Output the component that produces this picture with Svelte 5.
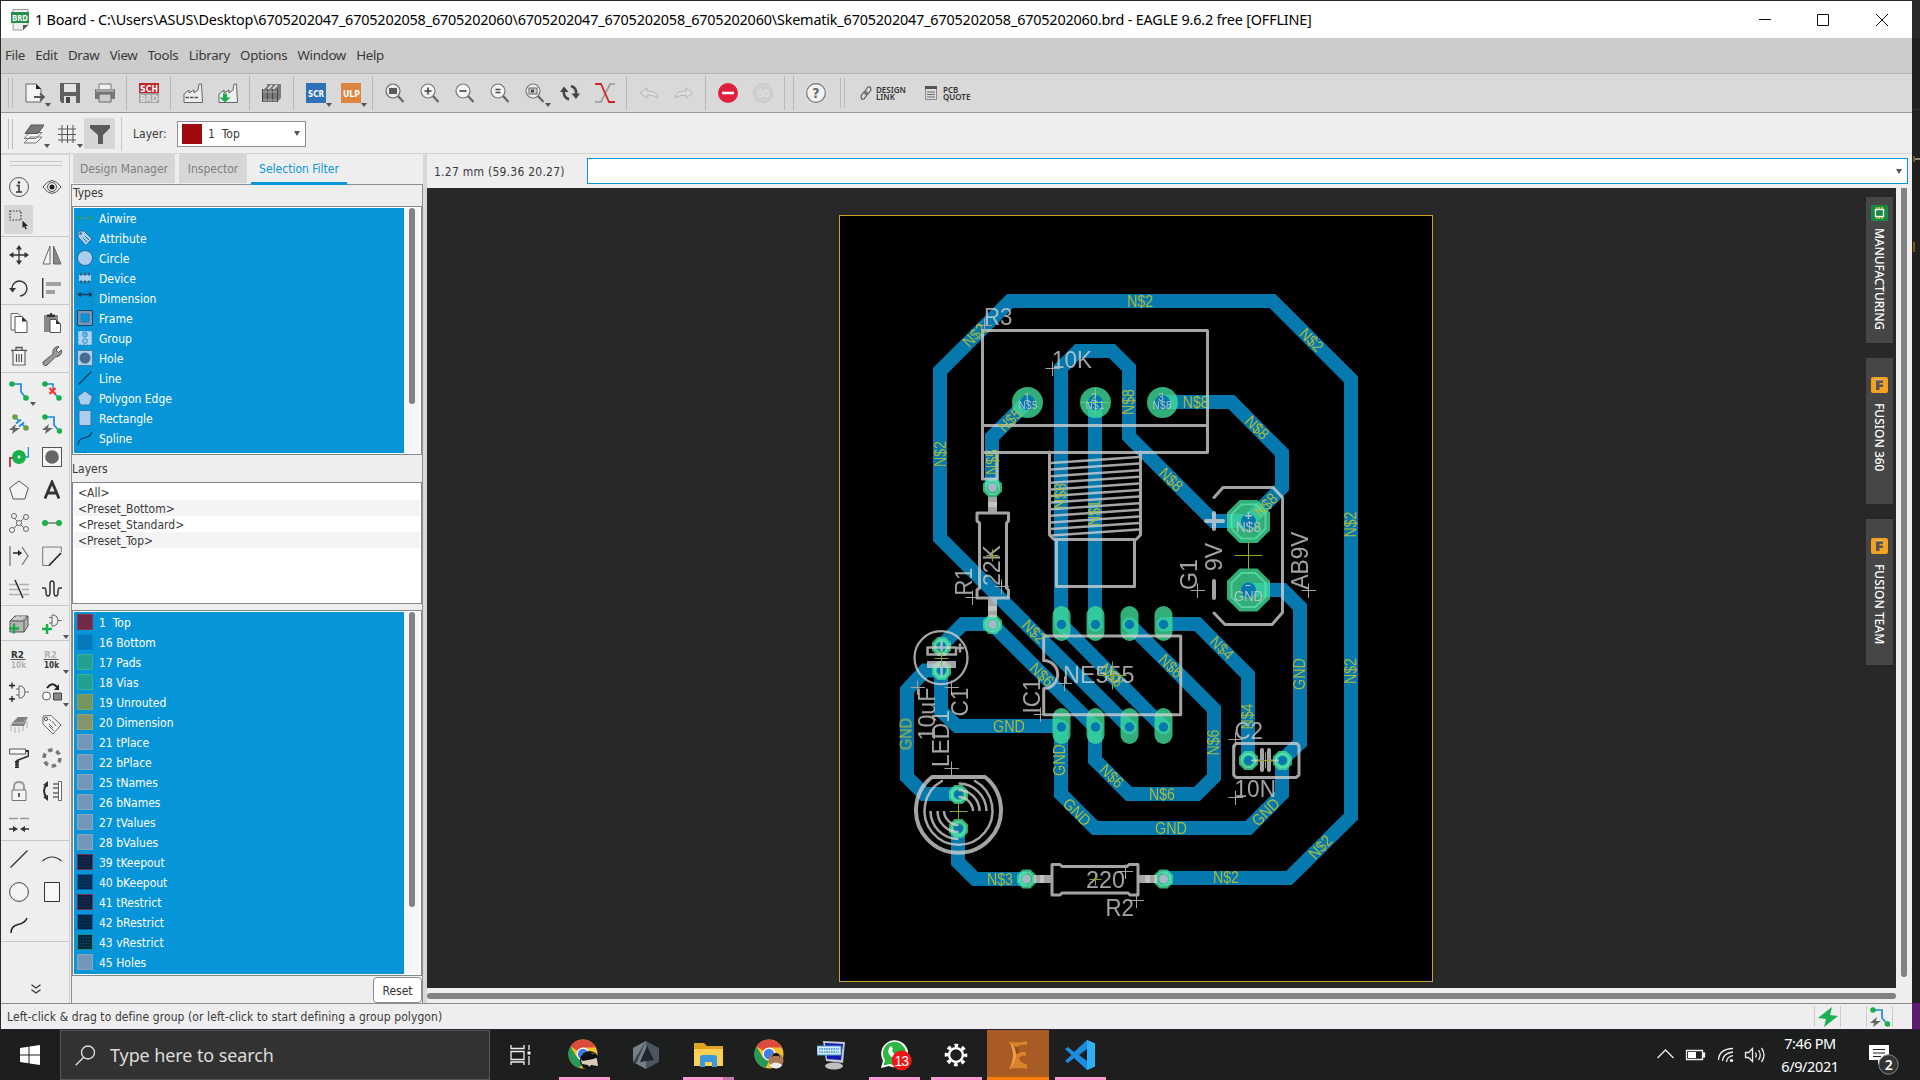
<script>
  const icons = {
    newfile: '<path d="M1 1h10l5 5v13H1z" fill="#f4f4f4" stroke="#666"/><path d="M11 1l5 5h-5z" fill="#222"/><path d="M9 14h9M15 10.500l4 3.500-4 3.500" fill="none" stroke="#555" stroke-width="1.800"/>',
    save: '<path d="M0 0h20v20H2l-2-2z" fill="#606060"/><path d="M4 1h12v8H4z" fill="#e4e4e4"/><path d="M4 13h12v7H4z" fill="#ddd"/><path d="M6 14h4v6H6z" fill="#444"/>',
    print: '<path d="M4 6V1h12v5" fill="#f0f0f0" stroke="#777"/><path d="M0 6h20v10H0z" fill="#777"/><path d="M1 6h18v3H1z" fill="#a2a2a2"/><path d="M4 11h12v8H4z" fill="#ccc" stroke="#666"/>',
    sch: '<rect width="20" height="10" fill="#c4242c"/><rect y="10" width="20" height="10" fill="#a2a2a2"/><text x="1" y="8.700" font-size="9" font-weight="700" fill="#fff" textLength="18" lengthAdjust="spacingAndGlyphs">SCH</text><text x="1" y="18.700" font-size="9" font-weight="700" fill="#e2e2e2" textLength="18" lengthAdjust="spacingAndGlyphs">BRD</text>',
    factory: '<path d="M1 19.500V11l5-4v3l5-3v3l4-3 1-6h2.500l1 18.500z" fill="#eee" stroke="#666"/><path d="M2.500 14.500h3.500m1 0h3.500m1 0h3.500" stroke="#555" stroke-width="1.700"/>',
    factory2: '<path d="M1 19.500V11l5-4v3l5-3v3l4-3 1-6h2.500l1 18.500z" fill="#eee" stroke="#666"/><path d="M5 10.500h4v4h3.500L7 19.500 1.500 14.500H5z" fill="#1cb04c"/>',
    books: '<path d="M0 6l5-5h14v14l-4 4H0z" fill="#7a7a7a"/><path d="M1 6l4-4M6 6l4-4M11 6l4-4" stroke="#eee" stroke-width="1.500"/><path d="M.5 6v13m5-13v13m5-13v13m5-13v13" stroke="#444"/><path d="M1 9h14M1 17h14" stroke="#aaa"/>',
    scr: '<rect width="20" height="20" fill="#2d72b8"/><text x="2" y="13.500" font-size="9" font-weight="700" fill="#fff" textLength="16" lengthAdjust="spacingAndGlyphs">SCR</text>',
    ulp: '<rect width="20" height="20" fill="#dc8440"/><text x="2" y="13.500" font-size="9" font-weight="700" fill="#fff" textLength="17" lengthAdjust="spacingAndGlyphs">ULP</text>',
    zfit: '<circle cx="8" cy="8" r="7" fill="#eee" stroke="#666" stroke-width="1.200"/><path d="M13 13l5.500 6" stroke="#666" stroke-width="2.200"/><rect x="4" y="5" width="8" height="6" fill="#5a5a5a"/>',
    zin: '<circle cx="8" cy="8" r="7" fill="#f4f4f4" stroke="#777" stroke-width="1.200"/><path d="M13 13l5.500 6" stroke="#666" stroke-width="2.200"/><path d="M4.500 8h7M8 4.500v7" stroke="#444" stroke-width="1.600"/>',
    zout: '<circle cx="8" cy="8" r="7" fill="#f4f4f4" stroke="#777" stroke-width="1.200"/><path d="M13 13l5.500 6" stroke="#666" stroke-width="2.200"/><path d="M4.500 8h7" stroke="#444" stroke-width="1.600"/>',
    zeq: '<circle cx="8" cy="8" r="7" fill="#f4f4f4" stroke="#777" stroke-width="1.200"/><path d="M13 13l5.500 6" stroke="#666" stroke-width="2.200"/><path d="M5.500 6.500h5M5.500 9.500h5" stroke="#444" stroke-width="1.400"/>',
    zsel: '<circle cx="8" cy="8" r="7" fill="#eee" stroke="#777" stroke-width="1.200"/><path d="M13 13l5.500 6" stroke="#666" stroke-width="2.200"/><rect x="4" y="5" width="8" height="6" fill="#ccc" stroke="#666"/><path d="M6 6.500h3v3H6z" fill="#444"/>',
    refresh: '<path d="M4 8q-1 6 5 8.500M16 11q1-6-5-8" fill="none" stroke="#444" stroke-width="2.600"/><path d="M0 9l4-5.500L8.500 9zM11.500 10.500h8.500L16 16z" fill="#444"/>',
    ripup: '<path d="M20 1h-5L6 19H0" fill="none" stroke="#999" stroke-width="1.700"/><path d="M0 1h6l8 18h6" fill="none" stroke="#d02828" stroke-width="1.800"/>',
    undo: '<path d="M1 10l7-5v3q11 0 11 7-4-3-11-3v3z" fill="#ddd" stroke="#b8b8b8"/>',
    redo: '<path d="M19 10l-7-5v3Q1 8 1 15q4-3 11-3v3z" fill="#ddd" stroke="#b8b8b8"/>',
    stop: '<circle cx="10" cy="10" r="10" fill="#e01f3d"/><path d="M4 10h12" stroke="#fff" stroke-width="2.600"/>',
    go: '<circle cx="10" cy="10" r="9.500" fill="#d0d0d0" stroke="#c6c6c6"/><text x="4" y="13.500" font-size="9.500" fill="#e8e8e8" textLength="12" lengthAdjust="spacingAndGlyphs">GO</text>',
    help: '<circle cx="10" cy="10" r="9.300" fill="#f4f4f4" stroke="#777" stroke-width="1.200"/><text x="6.200" y="15" font-size="14" font-weight="700" fill="#666">?</text>',
    layers: '<path d="M0 19l6-6h12l-6 6zM0 14.500l6-6h12l-6 6z" fill="#f4f4f4" stroke="#777"/><path d="M1 9.500L7 1h13l-6 8.500z" fill="#777" stroke="#555"/>',
    grid: '<path d="M5 1v18M10.500 1v18M16 1v18M1 5h18M1 10.500h18M1 16h18" stroke="#555"/>',
    filter: '<path d="M0 1h20v3l-7 7v9H8v-9L0 4z" fill="#5b5b5b"/>',
    info: '<circle cx="10" cy="10" r="9.500" fill="none" stroke="#555"/><circle cx="10" cy="5.500" r="1.300" fill="#333"/><path d="M7.500 8.500H10V15m-3 0h6" fill="none" stroke="#333" stroke-width="1.500"/>',
    eye: '<path d="M1 10q9-13 18 0-9 13-18 0z" fill="none" stroke="#555"/><circle cx="10" cy="10" r="4.500" fill="none" stroke="#555"/><circle cx="10" cy="10" r="2.500" fill="#222"/>',
    select: '<path d="M1 1h11v9H1z" fill="none" stroke="#333" stroke-width="1.200" stroke-dasharray="1.500 1.500"/><path d="M13.500 10.500v7.500l1.700-1.500 1.300 3 1.300-.7-1.300-2.800h2.500z" fill="#222"/>',
    move: '<path d="M10 2v16M2 10h16" stroke="#333" stroke-width="1.300"/><path d="M10 0l3 4.500H7zM10 20l3-4.500H7zM0 10l4.500-3v6zM20 10l-4.500-3v6z" fill="#333"/>',
    mirror: '<path d="M8 1v18H1z" fill="#f8f8f8" stroke="#666"/><path d="M11.500 1v18H19z" fill="#888" stroke="#666"/>',
    rotate: '<path d="M3 10a7.500 7.500 0 1 1 8 8" fill="none" stroke="#333" stroke-width="1.400"/><path d="M0 10h7l-3.500 4.500z" fill="#333"/>',
    align: '<path d="M.7 0v20" stroke="#333" stroke-width="1.400"/><path d="M4 4h15v4H4zM4 12h9v4H4z" fill="#a0a0a0"/>',
    copy: '<path d="M2 .5h7l4 4V17H2z" fill="#f8f8f8" stroke="#666"/><path d="M6 3.500h7l5 5v11H6z" fill="#fff" stroke="#555"/><path d="M13 3.500l5 5h-5z" fill="#333"/>',
    paste: '<path d="M2 2h14v17H2z" fill="#888"/><path d="M5 1.500h8V4H5zM8 0h2v2H8z" fill="#333"/><path d="M8 6.500h6l4.500 4.500v8.500H8z" fill="#fff" stroke="#555"/><path d="M14 6.500l4.500 4.500H14z" fill="#333"/>',
    trash: '<path d="M2 4.500h16M7 4V1.500h6V4" fill="none" stroke="#555" stroke-width="1.300"/><path d="M4 5v14h12V5" fill="#f4f4f4" stroke="#666" stroke-width="1.200"/><path d="M7.500 8v8M10 8v8m2.500-8v8" stroke="#555" stroke-width="1.200"/>',
    wrench: '<path d="M1 16L11 8q-1-6 4.500-7.500l1.500.5-3 3 2.500 2.500 3-2.500q1 6-6 7L4 20q-4-1-3-4z" fill="#999" stroke="#555"/>',
    route: '<path d="M3 3h9v8l6 7" fill="none" stroke="#1e88e5" stroke-width="1.700"/><circle cx="3" cy="3" r="2.800" fill="#18b04a"/><circle cx="17" cy="17" r="2.800" fill="#18b04a"/>',
    rip: '<path d="M3 3h8v8l6 6" fill="none" stroke="#1e88e5" stroke-width="1.500"/><circle cx="3" cy="3" r="2.800" fill="#18b04a"/><circle cx="17" cy="17" r="2.800" fill="#18b04a"/><path d="M7.500 7l6 6m0-6l-6 6" stroke="#f33" stroke-width="2.200"/>',
    auto1: '<path d="M6 3l4 4m2.500 2.500l4 4M7 9.500l5-4m-2 7l5-4" stroke="#1e88e5" stroke-width="1.700"/><circle cx="6" cy="3" r="2.800" fill="#69a04a"/><circle cx="17" cy="14" r="2.800" fill="#69a04a"/><path d="M0 16l7-6-1 4h5l-8 6 1-4z" fill="#666"/>',
    auto2: '<path d="M3 3h9v8l6 7" fill="none" stroke="#1e88e5" stroke-width="1.700"/><circle cx="3" cy="3" r="2.800" fill="#18b04a"/><circle cx="17.500" cy="17" r="2.800" fill="#18b04a"/><path d="M0 16l7-6-1 4h5l-8 6 1-4z" fill="#666"/>',
    via: '<path d="M1 20v-9h4" fill="none" stroke="#b8383c" stroke-width="1.800"/><path d="M19.500 0v10H14" fill="none" stroke="#1e88e5" stroke-width="1.500"/><circle cx="10" cy="10" r="4.200" fill="#fff" stroke="#18b04a" stroke-width="5.500"/>',
    hole: '<rect x=".5" y=".5" width="19" height="19" fill="#f4f4f4" stroke="#555"/><circle cx="10" cy="10" r="6.800" fill="#666"/>',
    poly: '<path d="M10 1l9.300 7-3.500 11H4.200L.7 8z" fill="#f4f4f4" stroke="#555"/>',
    text: '<path d="M3 18.500L10 2l7 16.500M5.500 13h9" fill="none" stroke="#333" stroke-width="2.800"/>',
    net: '<path d="M4 4l12 12M16 4L4 16" stroke="#666"/><g fill="#f4f4f4" stroke="#666"><circle cx="5" cy="3" r="2.500"/><circle cx="17" cy="4" r="2.500"/><circle cx="3" cy="17" r="2.500"/><circle cx="17" cy="16" r="2.500"/><circle cx="10" cy="10" r="2.500"/></g>',
    air: '<path d="M3 10h14" stroke="#888" stroke-width="1.800"/><circle cx="3" cy="10" r="3" fill="#18b04a"/><circle cx="17" cy="10" r="3" fill="#18b04a"/>',
    split: '<path d="M1 0v20" stroke="#555"/><path d="M4 7h7" stroke="#222" stroke-width="1.500"/><path d="M9 4l4 3-4 3z" fill="#222"/><path d="M13 1l6 9-6 9" fill="none" stroke="#777" stroke-width="1.300"/>',
    miter: '<path d="M8 19.500H.7V1h18.600v5" fill="none" stroke="#777"/><path d="M7 19.500L19 7" stroke="#222" stroke-width="1.600"/>',
    slice: '<path d="M0 5.500h8M10 5.500h10M0 10.500h10M13 10.500h7M0 15.500h12M14 15.500h6" stroke="#b0b0b0" stroke-width="1.500"/><path d="M6 1l8 18" stroke="#222" stroke-width="1.400"/>',
    meander: '<path d="M0 9h2.500Q4 9 4 13t2 4 2-4V5q0-3 2-3t2 3v8q0 4 2 4t2-4 1.500-4H20" fill="none" stroke="#333" stroke-width="1.500"/>',
    brick: '<path d="M1 7l5-5h13v10l-4 6H1z" fill="#b4b4b4" stroke="#555"/><path d="M1 7h14v11M15 7l4-5" fill="none" stroke="#555"/><path d="M4 5h4M9 5h4M7 3h4M12 3h4" stroke="#eee"/><path d="M5 9.500v10M0 14.500h10" stroke="#18a84a" stroke-width="2.500"/>',
    addgate: '<path d="M10 1h2q4 1 4 5.500T12 12h-2zM7 3.500h3M7 9h3M16 6.500h3.500" fill="none" stroke="#666"/><path d="M5 10v10M0 15h10" stroke="#18b04a" stroke-width="2.500"/>',
    name: '<text x="2" y="8.500" font-size="9.500" font-weight="700" fill="#333" textLength="13" lengthAdjust="spacingAndGlyphs">R2</text><path d="M1.500 10.500h15" stroke="#555"/><text x="2" y="19" font-size="9.500" font-weight="700" fill="#b4b4b4" textLength="15" lengthAdjust="spacingAndGlyphs">10k</text>',
    value: '<text x="2" y="8.500" font-size="9.500" font-weight="700" fill="#b4b4b4" textLength="13" lengthAdjust="spacingAndGlyphs">R2</text><path d="M1.500 10.500h15" stroke="#555"/><text x="2" y="19" font-size="9.500" font-weight="700" fill="#333" textLength="15" lengthAdjust="spacingAndGlyphs">10k</text>',
    gates: '<path d="M10 4h2q4 1 4 6t-4 6h-2zM7 7h3M7 13h3M16 10h4" fill="none" stroke="#666"/><path d="M3 .5v6M0 3.500h6M3 14v6M0 17h6" stroke="#222" stroke-width="1.300"/>',
    replace: '<path d="M5 6q5-7 10-1" fill="none" stroke="#222" stroke-width="2"/><path d="M17 2v6h-5z" fill="#222"/><circle cx="4.500" cy="14" r="4" fill="#fff" stroke="#555"/><path d="M11.500 11h8v7h-8z" fill="#888" stroke="#444"/>',
    chip: '<path d="M3 8l6-6h10l-4 9H2z" fill="#808080"/><path d="M3 8h11l5-6" fill="none" stroke="#bbb"/><path d="M2 9v7m4-4v6m4-6v6m4-7v5m4-9v6" stroke="#c4c4c4" stroke-width="1.500"/>',
    tag: '<path d="M1 1l8-.5L19 10l-8 9L1 9z" fill="#f4f4f4" stroke="#666"/><circle cx="4" cy="4" r="1.600" fill="none" stroke="#555"/><path d="M7 9l4 4m-1-7l4 5m-7-7l2 2m-2 5l5 5" stroke="#666"/>',
    roller: '<path d="M.6 1h16v5H.6z" fill="#f8f8f8" stroke="#555"/><path d="M17 3h2.500v5L8 12.500V20" fill="none" stroke="#333" stroke-width="1.800"/><path d="M8 13v7" stroke="#333" stroke-width="4" stroke-dasharray="2 .6"/>',
    ring: '<circle cx="10" cy="10" r="8" fill="none" stroke="#777" stroke-width="3.500" stroke-dasharray="4.500 3.877"/>',
    lock: '<path d="M5 9V6q0-5 5-5t5 5v3" fill="none" stroke="#999" stroke-width="1.900"/><path d="M3 9h14v10.500H3z" fill="#f4f4f4" stroke="#777"/><path d="M10 12v4" stroke="#444" stroke-width="1.700"/>',
    pinswap: '<path d="M5 3q-6 7 0 14" fill="none" stroke="#333" stroke-width="2"/><path d="M6 0v6L1 4zM6 20v-6l-5 2z" fill="#333"/><path d="M11 3h6M11 7h6M11 12h6M11 16h6" stroke="#666" stroke-width="1.400"/><path d="M16.500.5h3v19h-3z" fill="#fff" stroke="#666"/>',
    optimize: '<path d="M0 4.500h9M11 4.500h9" stroke="#999" stroke-width="1.600"/><path d="M0 15h6M14 15h6" stroke="#333" stroke-width="1.500"/><path d="M4 12l5 3-5 3zM16 12l-5 3 5 3z" fill="#333"/>',
    line: '<path d="M1.500 18.500L18.500 1.500" stroke="#333" stroke-width="1.200"/>',
    arc: '<path d="M.5 12q9.500-8 19 0" fill="none" stroke="#333" stroke-width="1.200"/>',
    circle: '<circle cx="10" cy="10" r="9.400" fill="#f4f4f4" stroke="#444"/>',
    rect: '<path d="M2.500.5h15v19h-15z" fill="#f8f8f8" stroke="#333"/>',
    spline: '<path d="M2 18q0-7 7-8.500T18 3" fill="none" stroke="#222" stroke-width="1.500"/>'
  };

  const typeIcons = {
    Airwire: '<path d="M3 8h10" stroke="#5a86a8" stroke-width="1.500"/><circle cx="2.300" cy="8" r="2.200" fill="#12a07c"/><circle cx="13.700" cy="8" r="2.200" fill="#12a07c"/>',
    Attribute: '<path d="M1 1h6l8 8-6 6.500L1 7z" fill="#acceee" stroke="#2a6a9c"/><circle cx="3.500" cy="3.500" r="1.300" fill="#2a6a9c"/><path d="M6 8l4 4m-2-6l4 4" stroke="#2a6a9c"/>',
    Circle: '<circle cx="8" cy="8" r="7.500" fill="#acceee" stroke="#2a6a9c"/>',
    Device: '<path d="M2 5h12v6H2z" fill="#acceee"/><path d="M4 2.500v3M8 2.500v3M12 2.500v3M4 10.500v3M8 10.500v3M12 10.500v3" stroke="#3b607e" stroke-width="2"/>',
    Dimension: '<path d="M.5 0v16M15.500 0v16" stroke="#3b78a8"/><path d="M2 4.500h12M4 2.500l-2.500 2L4 6.500m8-4l2.500 2-2.500 2" fill="none" stroke="#123a58" stroke-width="1.300"/>',
    Frame: '<path d="M.5.5h15v15H.5z" fill="#7295b8" stroke="#1c4868"/><path d="M4 4h8v8H4z" fill="#0795da" stroke="#2a6a9c" stroke-width=".6"/>',
    Group: '<path d="M1 1h14v14H1z" fill="#acd4f0" stroke="#3d86b8" stroke-dasharray="2 1.500"/><circle cx="8" cy="4.500" r="2.500" fill="#63b4e4" stroke="#3a9cd8"/><circle cx="8" cy="11" r="2.500" fill="#8cc8ee" stroke="#3a9cd8"/>',
    Hole: '<path d="M.5.5h15v15H.5z" fill="#acceee" stroke="#4a7ca4"/><circle cx="8" cy="8" r="5.500" fill="#486c8e"/>',
    Line: '<path d="M1.500 14.500l13-13" stroke="#123a58" stroke-width="1.200"/>',
    'Polygon Edge': '<path d="M8 1l7.300 5.500-2.700 8.500H3.400L.7 6.500z" fill="#acceee" stroke="#3a76a4"/>',
    Rectangle: '<path d="M2 .5h12v15H2z" fill="#acceee" stroke="#3a76a4"/>',
    Spline: '<path d="M1 15q0-6 6-7t8-6" fill="none" stroke="#123a58" stroke-width="1.200"/>'
  };
  const types = Object.keys(typeIcons);

  const menus = ['File', 'Edit', 'Draw', 'View', 'Tools', 'Library', 'Options', 'Window', 'Help'];

  // Each group is closed by a vertical separator.
  const mainTools = [
    [{ n: 'newfile', d: 1 }, { n: 'save' }, { n: 'print' }],
    [{ n: 'sch' }],
    [{ n: 'factory' }, { n: 'factory2' }],
    [{ n: 'books' }],
    [{ n: 'scr', d: 1 }, { n: 'ulp', d: 1 }],
    [{ n: 'zfit' }, { n: 'zin' }, { n: 'zout' }, { n: 'zeq' }, { n: 'zsel', d: 1 }, { n: 'refresh' }, { n: 'ripup' }],
    [{ n: 'undo' }, { n: 'redo' }],
    [{ n: 'stop' }, { n: 'go' }]
  ];

  const sideTools = [
    ['info', 'eye', 'select', ''],
    ['move', 'mirror', 'rotate', 'align'],
    ['copy', 'paste', 'trash', 'wrench'],
    ['route', 'rip', 'auto1', 'auto2', 'via', 'hole', 'poly', 'text', 'net', 'air', 'split', 'miter', 'slice', 'meander'],
    ['brick', 'addgate'],
    ['name', 'value', 'gates', 'replace', 'chip', 'tag', 'roller', 'ring', 'lock', 'pinswap', 'optimize', ''],
    ['line', 'arc', 'circle', 'rect', 'spline', '']
  ];
  const withDrop = ['route', 'addgate', 'value', 'replace'];

  const presets = ['<All>', '<Preset_Bottom>', '<Preset_Standard>', '<Preset_Top>'];

  const layers = [
    ['1  Top', '#722b46', '#8a3550'], ['16 Bottom', '#0479bb', '#0a84c8'], ['17 Pads', '#22a193', '#3cae9c'],
    ['18 Vias', '#22a193', '#3cae9c'], ['19 Unrouted', '#74965e', '#84a46a'], ['20 Dimension', '#87946a', '#9aa272'],
    ['21 tPlace', '#7397b8', '#86a6c4'], ['22 bPlace', '#7397b8', '#86a6c4'], ['25 tNames', '#7397b8', '#86a6c4'],
    ['26 bNames', '#7397b8', '#86a6c4'], ['27 tValues', '#7397b8', '#86a6c4'], ['28 bValues', '#7397b8', '#86a6c4'],
    ['39 tKeepout', '#0a2444', '#7c2c4c'], ['40 bKeepout', '#042c50', '#0468a8'], ['41 tRestrict', '#0a2444', '#7c2c4c'],
    ['42 bRestrict', '#042444', '#0468a8'], ['43 vRestrict', '#042840', '#1c9484'], ['45 Holes', '#7397b8', '#86a6c4']
  ];

  // Board routing, in screen units.
  const traces = [
    'M1163 878H1289L1351 816.500V379.500L1272.500 301H1010L940 371V538L1129 727',
    'M1163 402H1231.500L1282 453V487.500L1248 521.500',
    'M1061 624V368L1078 351H1112L1129 368V436.500L1213.500 521H1248',
    'M1061 624L1163 727', 'M1095 402V624', 'M1027 402L992 437V487',
    'M1095 727L992 624H963L941 646', 'M1129 624L1214 709V777L1197 794H1129L1095 760V727',
    'M941 670.500H925L907 690V777L924 794H958', 'M941 670V711L957 726H1061',
    'M1061 727V794L1095 828H1248.500L1282 794V760L1300 743V607L1283 590H1248',
    'M1163 624H1197.500L1248 675V760', 'M958 829V862L975 879H1026'
  ];

  const silk = [
    'M997 452V479H982.500V330.500H1207.500V452.500H982.500M982.500 425.500H1207.500',
    'M1049.500 452V535L1054 539.500H1136L1140.500 535V452M1056.500 539.500V586.500H1134.500V539.500',
    'M977 513H1008.500V521L1006.500 523V588L1008.500 590V598H977V590L979.500 588V523L977 521Z',
    'M1052 864.500H1060L1062 866.500H1127L1129 864.500H1138V895H1130L1128 893H1062L1060 895H1052Z',
    'M1043.700 660.500V636H1180.700V714.700H1043.700V688.500A14 14 0 0 0 1043.700 660.500',
    'M1214 497.500L1223 487.500H1273L1282.500 497.500V612.500L1272 624.500H1225L1214 613',
    'M1236 743.500H1297L1299 746V775L1296 777.500H1236L1233.700 775V746Z'
  ];
  const threads = Array.from({ length: 12 }, (_, i) => 463 + i * 6.6);

  // text, x, baseline, length, rotation
  const names = [
    ['R3', 984, 325, 28.5, 0], ['10K', 1052, 367.7, 40, 0], ['22K', 1000, 586, 41, -90], ['R1', 971.5, 595.5, 28, -90],
    ['10uF', 934.5, 740.5, 53, -90], ['C1', 967.7, 716.5, 29, -90], ['LED1', 949, 767, 57, -90], ['IC1', 1040, 713.5, 35, -90],
    ['NE555', 1063, 682.7, 71.5, 0], ['G1', 1197, 590, 31, -90], ['9V', 1222, 571, 28, -90], ['AB9V', 1307.7, 589.5, 58, -90],
    ['C2', 1234.5, 739, 28.5, 0], ['10N', 1234.5, 796.7, 41.5, 0], ['220', 1086, 887.7, 39, 0], ['R2', 1105.5, 916, 28.5, 0]
  ];

  const nets = [
    ['N$2', 1140, 301, 0], ['N$2', 974.5, 335, -45], ['N$2', 940, 454, -90], ['N$2', 1311.5, 340, 45], ['N$2', 1350, 524.5, -90],
    ['N$2', 1350, 671, -90], ['N$2', 1320, 847, -45], ['N$2', 1226, 877.5, 0], ['N$8', 1128, 402, -90], ['N$8', 1195.5, 402, 0],
    ['N$8', 1257, 427.5, 45], ['N$8', 1171, 479.5, 45], ['N$8', 1265.5, 505, -45], ['N$8', 1060, 496, -90], ['N$1', 1094, 513, -90],
    ['N$5', 1010, 420, -45], ['N$5', 992, 462, -90], ['N$2', 1034, 631.5, 45], ['N$6', 1042, 674.5, 45], ['N$8', 1112, 675, 45],
    ['N$6', 1171, 666, 45], ['N$4', 1222, 648, 45], ['N$4', 1247.5, 716.5, -90], ['GND', 1299, 674, -90], ['N$6', 1213.5, 742.5, -90],
    ['N$6', 1112, 776, 45], ['N$6', 1162, 794, 0], ['GND', 1171, 828, 0], ['GND', 1265.5, 812, -45], ['GND', 1077, 812, 45],
    ['GND', 1059.5, 760, -90], ['GND', 1009, 726, 0], ['GND', 905.5, 734, -90], ['N$3', 1000, 879, 0]
  ];

  const octagon = (x, y, r) => {
    const k = r * 0.414;
    return `M${x - k} ${y - r}H${x + k}L${x + r} ${y - k}V${y + k}L${x + k} ${y + r}H${x - k}L${x - r} ${y + k}V${y - k}Z`;
  };
  const roundPads = [1027.5, 1095.5, 1162.5];
  const icX = [1061.5, 1095.5, 1129.5, 1163.5];
  const smallPads = [
    [992.5, 487.5, 1], [992.5, 624.5, 1], [1026.5, 879, 1], [1163.5, 879, 1], [941.5, 646.5, 0], [941.5, 670.5, 0],
    [958.5, 794.5, 0], [958.5, 828.5, 0], [1248.5, 760.5, 0], [1282.5, 760.5, 0]
  ];
  const crosses = [
    [984.5, 325.5], [1052.5, 368.5], [972.5, 597.5], [1001.5, 586.5], [917.5, 687.5], [951.5, 687.5], [951.5, 768.5], [1064.5, 683.5],
    [1040.5, 714.5], [1125.5, 871.5], [1136.5, 900.5], [1197.5, 590.5], [1308.5, 590.5], [1235.5, 739.5], [1235.5, 797.5]
  ];
  const origins = [[1248.5, 555.5, 14], [992.5, 555.5, 6], [941.5, 658.5, 7], [958.5, 811.5, 9], [1112.5, 675.5, 14], [1095.5, 879.5, 6], [1265.5, 760.5, 8]];

  const sideTabs = [['MANUFACTURING', 'mfg'], ['FUSION 360', 'f360'], ['FUSION TEAM', 'team']];
</script>

{#snippet icon(name)}
  <svg class="ic" width="20" height="20" viewBox="0 0 20 20">{@html icons[name]}</svg>
{/snippet}

{#snippet chrome()}
  <circle cx="15" cy="15" r="14.500" fill="#f3c02c" />
  <path d="M15 15L2.500 7.500A14.500 14.500 0 0 1 28 8.500H15z" fill="#dd4b3e" />
  <path d="M2.500 7.500L9 18.500l6 4-3.500 6.600A14.500 14.500 0 0 1 2.500 7.500z" fill="#25985a" />
  <circle cx="15" cy="15" r="6.500" fill="#fff" /><circle cx="15" cy="15" r="5.200" fill="#3f7ee8" />
{/snippet}

<div class="screen">
  <div class="main">
    <div class="window">
      <header class="title">
        <svg width="20" height="22" viewBox="0 0 20 22"><path d="M2 .5h15V16l-5 5H2z" fill="#eee" stroke="#999" /><path d="M0 3h18v11H0z" fill="#24904a" /><path d="M12 21v-5h5z" fill="#555" /><text x="1" y="11.700" font-size="8.500" font-weight="700" fill="#fff" textLength="16" lengthAdjust="spacingAndGlyphs">BRD</text></svg>
        <span class="caption">1 Board - C:\Users\ASUS\Desktop\6705202047_6705202058_6705202060\6705202047_6705202058_6705202060\Skematik_6705202047_6705202058_6705202060.brd - EAGLE 9.6.2 free [OFFLINE]</span>
        <svg class="controls" width="130" height="14" viewBox="0 0 130 14" fill="none" stroke="#111"><path d="M0 6.500h12M58.500 1.500h11v11h-11zM117 1l12 12M129 1l-12 12" /></svg>
      </header>

      <nav class="menu">{#each menus as m}<span>{m}</span>{/each}</nav>

      <div class="toolbar">
        <i class="grip"></i>
        {#each mainTools as group}
          <div class="group">
            {#each group as t}
              <span class="tool">{@render icon(t.n)}{#if t.d}<i class="drop"></i>{/if}</span>
            {/each}
          </div>
        {/each}
        <i class="vline"></i>
        <span class="tool help">{@render icon('help')}</span>
        <i class="grip right"></i>
        <div class="brand">
          <svg width="12" height="14" viewBox="0 0 12 14" fill="none" stroke="#555" stroke-width="1.100"><path d="M5 5l3-4q3-1 3 3L8 8H5zM7 9l-3 4q-3 1-3-3l3-4h3z" /></svg>
          <b>DESIGN<br />LINK</b>
        </div>
        <div class="brand quote">
          <svg width="12" height="14" viewBox="0 0 12 14"><path d="M.5.5h11v13H.5z" fill="#ddd" stroke="#888" /><path d="M0 0h12v3H0z" fill="#555" /><path d="M2 6h8M2 8.500h8M2 11h8" stroke="#666" /></svg>
          <b>PCB<br />QUOTE</b>
        </div>
      </div>

      <div class="toolbar second">
        <i class="grip"></i>
        <span class="tool lay">{@render icon('layers')}<i class="drop"></i></span>
        <span class="tool grd">{@render icon('grid')}<i class="drop"></i></span>
        <span class="filter">{@render icon('filter')}</span>
        <i class="vline2"></i>
        <span class="laylabel">Layer:</span>
        <div class="combo"><i class="red"></i><span>1&nbsp; Top</span><i class="caret"></i></div>
      </div>

      <div class="work">
        <aside class="tools">
          <i class="hgrip"></i>
          {#each sideTools as group}
            <div class="toolgroup">
              {#each group as t}
                <span class="cell" class:active={t === 'select'}>
                  {#if t}{@render icon(t)}{/if}
                  {#if withDrop.includes(t)}<i class="drop"></i>{/if}
                </span>
              {/each}
            </div>
          {/each}
          <svg class="more" width="10" height="10" viewBox="0 0 10 10" fill="none" stroke="#333" stroke-width="1.300"><path d="M.5.8L5 4l4.500-3.200M.5 5.800L5 9l4.500-3.200" /></svg>
        </aside>

        <section class="panel">
          <div class="tabs"><span class="dm">Design Manager</span><span class="ins">Inspector</span><span class="sel">Selection Filter</span></div>
          <div class="frame">
            <div class="head types">Types</div>
            <div class="box typebox">
              <ul class="blue">
                {#each types as t}
                  <li><svg width="16" height="16" viewBox="0 0 16 16">{@html typeIcons[t]}</svg><span>{t}</span></li>
                {/each}
                <li><svg width="16" height="16" viewBox="0 0 16 16"><path d="M5 5l3-3 3 3z" fill="#123a58" /></svg></li>
              </ul>
              <div class="scroll"><i class="thumb t1"></i></div>
            </div>
            <div class="head lay2">Layers</div>
            <ul class="box presets">{#each presets as p}<li>{p}</li>{/each}</ul>
            <div class="box layerbox">
              <ul class="blue">
                {#each layers as [label, fill, edge], i}
                  <li><svg width="16" height="16" viewBox="0 0 16 16"><rect x=".5" y=".5" width="15" height="15" {fill} stroke={edge} />{#if i > 11 && i < 17}<path d="M3 3v11M6 3v11M9 3v11M12 3v11" stroke={edge} stroke-dasharray="1 2" opacity=".6" />{/if}</svg><span>{label}</span></li>
                {/each}
              </ul>
              <div class="scroll"><i class="thumb t2"></i></div>
            </div>
            <button class="reset">Reset</button>
          </div>
        </section>

        <section class="editor">
          <div class="cmdbar"><span>1.27 mm (59.36 20.27)</span><div class="cmd"><i class="caret"></i></div></div>
          <div class="view">
            <div class="canvas">
              <svg width="1469" height="800" viewBox="427 188 1469 800" font-family="Liberation Sans, sans-serif">
                <rect x="839.500" y="215.500" width="593" height="766" fill="#000" stroke="#c8a32c" />
                <g fill="none" stroke="#0578ad" stroke-width="14">
                  {#each traces as d}<path {d} />{/each}
                </g>
                <g fill="#40df9a" opacity=".78">
                  {#each roundPads as x}<circle cx={x} cy="402.500" r="15.500" />{/each}
                  {#each icX as x}
                    <rect x={x - 9} y="606" width="18" height="35" rx="9" />
                    <rect x={x - 9} y="708" width="18" height="36" rx="9" />
                  {/each}
                  <path d={octagon(1248.5, 521.5, 21.500)} /><path d={octagon(1248.5, 590, 21.500)} />
                  {#each smallPads as [x, y]}<path d={octagon(x, y, 9.5)} />{/each}
                </g>
                <g fill="none" stroke="#6ff0b8" stroke-width="2" opacity=".55">
                  <path d={octagon(1248.5, 521.5, 17)} /><path d={octagon(1248.5, 590, 17)} />
                  {#each smallPads as [x, y]}<path d={octagon(x, y, 6.5)} />{/each}
                </g>
                <g fill="#0578ad">
                  {#each roundPads as x}<circle cx={x} cy="402.500" r="7.500" />{/each}
                  {#each icX as x}
                    <path d={octagon(x, 624.5, 7)} fill="#34c99d" /><path d={octagon(x, 727, 7)} fill="#34c99d" />
                    <circle cx={x} cy="624.500" r="4.700" /><circle cx={x} cy="727" r="4.700" />
                  {/each}
                  <circle cx="1248.500" cy="521.500" r="7.500" /><circle cx="1248.500" cy="590" r="7.500" />
                  {#each smallPads as [x, y, lead]}<circle cx={x} cy={y} r="4.500" fill={lead ? '#a5b8c8' : '#0578ad'} />{/each}
                </g>
                <g opacity=".78">
                  <g fill="none" stroke="#d2d2d2" stroke-width="3" stroke-linejoin="round" stroke-linecap="round">
                    {#each silk as d}<path {d} />{/each}
                    {#each threads as y}<path d="M1051 {y}L1139 {y - 6}" stroke-width="2.500" />{/each}
                    <circle cx="941" cy="657.700" r="26.500" stroke-width="2.300" />
                    <path d="M927.500 647.500H956V654.500H927.500ZM956 648H963M960 644.500V651.500M941.500 642V650M941.500 666V675" stroke-width="2.500" />
                    <path d="M932 777H985A42.500 42.500 0 1 1 932 777Z" stroke-width="4" />
                    <path d="M942 781A34 34 0 1 0 975 781" stroke-width="2.500" />
                    <path d="M958.500 797A14.500 14.500 0 0 1 973 811M958.500 790A21 21 0 0 1 979.500 811M958.500 783.500A28 28 0 0 1 986.500 811M958.500 825A14.500 14.500 0 0 1 944 811M958.500 832A21 21 0 0 1 937.500 811M958.500 839A28 28 0 0 1 930.500 811" stroke-width="2.500" stroke-linecap="butt" />
                    <path d="M1206 521H1223M1214 513V529M1214 581V598M1262 750V770M1269 750V770" stroke-width="4" />
                    <path d="M1252 760.500H1262M1269 760.500H1278" stroke-width="2" />
                  </g>
                  <path d="M927 661h29v7h-29zM988 497h9v16h-9zM988 599h9v18h-9zM1034 875h17v8h-17zM1139 875h18v8h-18z" fill="#d2d2d2" />
                  <path d="M988 502h9v5h-9zM988 606h9v5h-9zM1040 875h4v8h-4zM1145 875h5v8h-5z" fill="#fafafa" />
                </g>
                <g stroke="#a4a4a4">
                  {#each crosses as [x, y]}<path d="M{x - 7} {y}h14.500M{x} {y - 7}v14.500" />{/each}
                </g>
                <g fill="#d2d2d2" opacity=".78" font-size="23.500">
                  {#each names as [t, x, y, len, rot]}<text {x} {y} textLength={len} lengthAdjust="spacingAndGlyphs" transform="rotate({rot} {x} {y})">{t}</text>{/each}
                </g>
                <g fill="#a6ba44" font-size="16" text-anchor="middle">
                  {#each nets as [t, x, y, rot]}<text {x} y={y + 5.6} textLength={t === 'GND' ? 32 : 26} lengthAdjust="spacingAndGlyphs" transform="rotate({rot} {x} {y})">{t}</text>{/each}
                </g>
                <g stroke="#93a522">
                  {#each origins as [x, y, r]}<path d="M{x - r} {y}H{x + r}M{x} {y - r}V{y + r}" />{/each}
                  <path d="M1081 402.500h28M1095.500 388v28" stroke="#58d466" />
                </g>
                <g fill="#b4c4cc" font-size="10" text-anchor="middle">
                  <text x="1027" y="401">1</text><text x="1028" y="409" textLength="19">N$5</text>
                  <text x="1094" y="401">2</text><text x="1095" y="409" textLength="19">N$1</text>
                  <text x="1161" y="401">3</text><text x="1162" y="409" textLength="19">N$8</text>
                  <text x="1248.500" y="532" font-size="15" textLength="25" lengthAdjust="spacingAndGlyphs">N$8</text>
                  <text x="1248.500" y="601" font-size="15" textLength="29" lengthAdjust="spacingAndGlyphs">GND</text>
                  <path d="M1245 515h7v1.500h-7zM1247.700 512h1.500v7h-1.500zM1245.500 585h5v1h-5z" />
                </g>
              </svg>
              <div class="sidetabs">
                {#each sideTabs as [label, kind]}
                  <div class="sidetab {kind}">
                    <svg width="17" height="16" viewBox="0 0 17 16">
                      {#if kind === 'mfg'}
                        <rect width="17" height="16" rx="2" fill="#188a48" /><path d="M6 2v12M8.500 2v12M11 2v12" stroke="#f0d020" stroke-width="1.300" /><rect x="4.500" y="4.500" width="8" height="7" fill="#188a48" stroke="#fff" stroke-width="1.300" />
                      {:else}
                        <rect width="17" height="16" rx="2" fill="#f5a122" /><path d="M5 3h7v3H8.500v1.500H12V10H8.500v3H5z" fill="#555" /><path d="M5 3h7" stroke="#fff" opacity=".5" />
                      {/if}
                    </svg>
                    <span>{label}</span>
                  </div>
                {/each}
              </div>
            </div>
            <div class="vbar"><i></i></div>
          </div>
          <div class="hbar"><i></i></div>
        </section>
      </div>

      <footer class="status">
        <span>Left-click &amp; drag to define group (or left-click to start defining a group polygon)</span>
        <div class="statbox"><svg width="20" height="20" viewBox="0 0 20 20"><path d="M0 11L14 0l-2 8 8 1L6 20l2-8z" fill="#18b050" /></svg></div>
        <div class="statbox last">{@render icon('auto2')}</div>
      </footer>
    </div>
    <div class="behind"><i class="s1"></i><i class="s2"></i><i class="s3"></i><i class="s4"></i><i class="s5"></i></div>
  </div>

  <div class="taskbar">
    <div class="start"><svg width="20" height="20" viewBox="0 0 20 20"><path d="M0 3l8.500-1.300v7.800H0zM9.500 1.500L20 0v9.500H9.500zM0 10.500h8.500v7.800L0 17zM9.500 10.500H20V20L9.500 18.500z" fill="#fff" /></svg></div>
    <div class="search">
      <svg width="21" height="21" viewBox="0 0 21 21" fill="none" stroke="#ddd" stroke-width="1.400"><circle cx="13" cy="7.500" r="6.500" /><path d="M8.500 12.500L.7 20.300" /></svg>
      <span>Type here to search</span>
    </div>
    <div class="apps">
      <div class="app tasks"><svg width="22" height="20" viewBox="0 0 22 20" fill="none" stroke="#eee" stroke-width="1.300"><path d="M1 0v3.500h13V0M1 6.500h13v8H1zM1 20v-3h13v3M19 0v5M19 11v9" /><path d="M17.500 6.500h3v3h-3z" fill="#fff" stroke="none" /></svg></div>
      <div class="app on">
        <svg width="32" height="32" viewBox="0 0 32 32">{@render chrome()}<circle cx="21.500" cy="21.500" r="9.500" fill="#15171a" /><path d="M13 21l6-6 6-1 4 6 1 7-7-1-2 2-7-3z" fill="#d8ccb4" /><path d="M12.500 18q9-8 17 0l-4 2-11 2zM14 25l6 1 2 4z" fill="#0c0e12" /></svg>
      </div>
      <div class="app"><svg width="26" height="28" viewBox="0 0 26 28"><path d="M13 0l13 7v14l-13 7-13-7V7z" fill="#4c545e" /><path d="M13 0v28L0 21V7z" fill="#767e88" /><path d="M14 5l7 14-14 2z" fill="#20262e" /><path d="M13 0L0 21l3 2z" fill="#3c444e" /></svg></div>
      <div class="app on folder"><svg width="29" height="24" viewBox="0 0 29 24"><path d="M0 0h10l3 3h16v20H0z" fill="#e0a020" /><path d="M0 6h29v17H0z" fill="#fccf55" /><path d="M6 24v-9q0-3 3-3h11q3 0 3 3v9h-5v-5h-7v5z" fill="#3a98dc" /></svg></div>
      <div class="app"><svg width="32" height="32" viewBox="0 0 32 32">{@render chrome()}<circle cx="22" cy="21.500" r="7.500" fill="#b07850" /><path d="M18 19a4 5 0 0 1 8 0l-1-2-6 0z" fill="#1c1412" /><path d="M15.500 26q6-5 13 0-3 3.500-6.500 3.500t-6.500-3.500z" fill="#eee" /></svg></div>
      <div class="app"><svg width="30" height="30" viewBox="0 0 30 30"><path d="M6 1l22 1-2 21-17-2z" fill="#c4c8d0" /><path d="M8 3l18 1-2 16-14-1z" fill="#1018b0" /><path d="M0 6h24v9H0z" fill="#d8ecf8" stroke="#4a9cd8" /><path d="M2 9h20M2 12h20" stroke="#3a8cd8" stroke-width="1.700" stroke-dasharray="1.600 .8" /><ellipse cx="17" cy="26" rx="9" ry="3.500" fill="#c0c0c4" /></svg></div>
      <div class="app on wa">
        <svg width="32" height="32" viewBox="0 0 32 32"><path d="M1 29l2-7.500A13.500 13.500 0 1 1 9 27z" fill="#fff" /><path d="M3.500 26.500L5 21A11.500 11.500 0 1 1 10 25z" fill="#2cb742" /><path d="M9.500 8q2-2 3.500 2l-1 2q2 4 5.500 5.500l2-1.500q4 1 2.500 3-3 4-9 0T8.500 11z" fill="#fff" /><circle cx="21.700" cy="21.500" r="10" fill="#f01414" /><text x="14.500" y="26.500" font-size="14" fill="#fff" textLength="14.500">13</text></svg>
      </div>
      <div class="app on"><svg width="24" height="24" viewBox="0 0 24 24" fill="none" stroke="#fff"><circle cx="12" cy="12" r="6.900" stroke-width="2.400" /><circle cx="12" cy="12" r="9.600" stroke-width="3.400" stroke-dasharray="3.700 3.840" stroke-dashoffset="1.800" /></svg></div>
      <div class="app eagle"><svg width="20" height="30" viewBox="0 0 20 30"><path d="M1 1.500Q10 3.500 19 1V5Q12 4 9 7Q11 10 11 13Q15 11 18 12V16Q14 15 11 17.500Q11 22 19 24.500V29Q10 27 1 29Q6 22 6 15T1 1.500Z" fill="#d9822b" /><path d="M1 1.500Q8 8 8 15T1 29Q5 22 5 15T1 1.500Z" fill="#f0a04a" /><path d="M9 7Q11 10 11 13L8 14Q8 10 6 6Z" fill="#8e4a14" /></svg></div>
      <div class="app on"><svg width="31" height="30" viewBox="0 0 31 30"><path d="M22 0l8 3.500v23L22 30 9 18l-6 5-3-2 6.500-6L0 9l3-2 6 5zM22 9l-8 6 8 6z" fill="#1c8cdc" fill-rule="evenodd" /><path d="M22 0l8 3.500v23L22 30z" fill="#2fb0f4" /></svg></div>
    </div>
    <div class="tray">
      <svg width="110" height="18" viewBox="0 0 110 18" fill="none" stroke="#eee" stroke-width="1.300">
        <path d="M.5 12L8.500 4l8 8" /><path d="M29.500 4.500h16v9h-16z" /><path d="M46.500 7h1v4h-1z" /><path d="M31 6h8v6h-8z" fill="#fff" stroke="none" />
        <path d="M61.500 14Q62 3 76 2.500M65.500 15Q66 7 76 6M69.500 16Q70 10.500 76 9.700" /><circle cx="74.500" cy="14.500" r="1.600" fill="#fff" stroke="none" />
        <path d="M88.500 6.500h3l4-4v13l-4-4h-3zM98.500 6.500q1.500 2.500 0 5M101.500 4q3.500 5 0 10M104.500 2q5 7 0 14" />
      </svg>
      <div class="clock"><span>7:46 PM</span><span>6/9/2021</span></div>
      <svg class="notif" width="30" height="30" viewBox="0 0 30 30"><path d="M0 0h20v15h-6l-5 5v-5H0z" fill="#fff" /><path d="M4 4.500h12M4 8h12M4 11.500h8" stroke="#222" /><circle cx="19.500" cy="19.500" r="9.700" fill="#333" stroke="#888" /><text x="15.700" y="24.700" font-size="14" font-weight="600" fill="#fff">2</text></svg>
    </div>
  </div>
</div>

<style>
  :global(body) { margin: 0; background: #1e1e1e; }
  .screen { width: 1920px; height: 1080px; display: flex; flex-direction: column; overflow: hidden; font: 12px 'DejaVu Sans Condensed', 'Noto Sans', sans-serif; color: #3a3a3a; background: #1e1e1e; }
  svg { display: block; flex: none; }
  svg :global(text) { font-family: inherit; }
  ul { list-style: none; margin: 0; padding: 0; }
  i { display: block; flex: none; }
  .main { height: 1030px; display: flex; box-sizing: border-box; padding: 1px 0 0 1px; border-bottom: 1px solid #2d1c38; background: #2a2a2a; }
  .window { width: 1911px; display: flex; flex-direction: column; background: #eee; }
  .window > :global(*) { flex-shrink: 0; }

  .title { height: 37px; display: flex; align-items: center; background: #fff; padding-left: 10px; color: #000; font-family: 'Noto Sans', sans-serif; }
  .caption { margin-left: 4px; font-size: 14.4px; white-space: nowrap; width: 1380px; letter-spacing: -0.175px; }
  .controls { margin-left: 344px; }
  .menu { height: 34px; padding-bottom: 1px; display: flex; align-items: center; gap: 10.2px; padding-left: 4px; background: #ccc; border-bottom: 1px solid #b4b4b4; font: 13.3px 'Noto Sans', sans-serif; letter-spacing: -0.32px; }

  .toolbar { height: 38px; display: flex; align-items: center; background: #d9d9d9; border-bottom: 1px solid #969696; }
  .grip { width: 3px; height: 30px; border-left: 1px solid #bbb; border-right: 1px solid #bbb; margin-left: 7px; }
  .group { height: 34px; display: flex; align-items: center; gap: 15px; padding: 0 11.5px; border-right: 1px solid #b8b8b8; }
  .tool { position: relative; width: 20px; height: 20px; }
  .drop { position: absolute; right: -6px; bottom: -4px; border: 3px solid transparent; border-top: 4px solid #555; border-bottom: 0; }
  .vline { width: 1px; height: 34px; background: #b8b8b8; margin-left: 8px; }
  .help { margin: 0 14px 0 12px; }
  .grip.right { margin: 0 15px 0 0; }
  .brand { display: flex; align-items: center; gap: 4px; width: 62px; font: 600 8px/7.5px 'Noto Sans', sans-serif; color: #333; }
  .brand b { font-weight: 600; }
  .quote { gap: 6px; margin-left: 3px; }
  .second { box-sizing: border-box; height: 41px; padding-top: 1px; background: #eee; border-bottom: 1px solid #d4d4d4; }
  .lay { margin-left: 11px; }
  .grd { margin: 0 7px 0 13px; }
  .filter { width: 31px; height: 31px; background: #d6d6d6; display: grid; place-items: center; border-radius: 2px; }
  .vline2 { width: 1px; height: 34px; background: #c8c8c8; margin-left: 6px; }
  .laylabel { width: 44px; margin-left: 11px; padding-top: 1px; }
  .combo { box-sizing: border-box; width: 129px; height: 26px; border: 1px solid #909090; background: #fff; display: flex; align-items: center; padding-left: 4px; }
  .combo span { flex: 1; padding: 1px 0 0 6px; }
  .red { width: 20px; height: 20px; background: #9e0a0e; }
  .caret { border: 3px solid transparent; border-top: 5px solid #555; border-bottom: 0; margin-right: 5px; }

  .work { height: 849px; display: flex; border-bottom: 1px solid #8a8a8a; }
  .tools { width: 69px; box-sizing: border-box; border-right: 1px solid #d0d0d0; border-top: 1px solid #d4d4d4; display: flex; flex-direction: column; margin-right: 1px; }
  .hgrip { width: 52px; height: 3px; border-top: 1px solid #c8c8c8; border-bottom: 1px solid #c8c8c8; margin: 6px 0 3px 9px; }
  .toolgroup { display: grid; grid-template-columns: 33px 33px; grid-auto-rows: 33px; padding: 1px 0 0 1px; border-bottom: 1px solid #c6c6c6; }
  .cell { position: relative; display: grid; place-items: center; }
  .cell.active::before { content: ''; position: absolute; inset: 2px; background: #d6d6d6; border-radius: 2px; }
  .cell .ic { position: relative; }
  .cell .drop { right: -1px; bottom: 1px; }
  .more { margin: 42px 0 0 30px; }

  .panel { width: 352px; display: flex; flex-direction: column; border-right: 4px solid #d8d8d8; }
  .tabs { height: 30px; display: flex; box-sizing: border-box; gap: 4px; padding-left: 2px; color: #808080; }
  .tabs span { height: 29px; line-height: 30px; text-align: center; background: #d6d6d6; border-radius: 2px 2px 0 0; white-space: nowrap; }
  .tabs .dm { width: 102px; }
  .tabs .ins { width: 68px; }
  .tabs .sel { position: relative; width: 96px; height: 28px; background: none; color: #0896dc; border-bottom: 3px solid #0896dc; }
  .frame { flex: 1; box-sizing: border-box; border: 1px solid #8a8f98; display: flex; flex-direction: column; }
  .head.types { height: 21px; line-height: 17px; padding-left: 1px; }
  .head.lay2 { height: 27px; line-height: 28px; }
  .box { box-sizing: border-box; border: 1px solid #7f8790; background: #fff; padding: 1px; }
  .typebox { height: 249px; display: flex; }
  .layerbox { height: 366px; display: flex; margin-top: 6px; }
  .blue { width: 330px; background: #0795da; overflow: hidden; color: #fff; }
  .blue li { height: 20px; display: flex; align-items: center; gap: 6px; padding-left: 3px; white-space: pre; }
  .blue li span { padding-top: 1px; }
  .scroll { width: 16px; background: #f6f6f6; }
  .thumb { width: 6px; margin-left: 5px; background: #828282; border-radius: 3px; }
  .t1 { height: 196px; }
  .t2 { height: 295px; }
  .presets { height: 122px; }
  .presets li { height: 16px; line-height: 18px; padding-left: 4px; }
  .presets li:nth-child(even) { background: #f4f4f4; }
  .reset { align-self: flex-end; width: 49px; height: 26px; margin-top: 1px; border: 1px solid #8a8a8a; border-radius: 4px; background: #fff; font: inherit; color: #333; padding: 1px 0 0; }

  .editor { flex: 1; display: flex; flex-direction: column; }
  .cmdbar { height: 34px; display: flex; align-items: center; }
  .cmdbar span { width: 153px; padding: 1px 0 0 7px; letter-spacing: 0.25px; white-space: nowrap; }
  .cmd { width: 1321px; height: 26px; box-sizing: border-box; border: 1px solid #0896dc; background: #fff; display: flex; align-items: center; justify-content: flex-end; }
  .view { height: 800px; display: flex; }
  .canvas { position: relative; width: 1469px; background: #282828; }
  .vbar { width: 16px; }
  .vbar i { width: 6px; height: 789px; margin-left: 5px; background: #828282; border-radius: 0 0 3px 3px; }
  .hbar { height: 15px; padding-top: 5px; box-sizing: border-box; }
  .hbar i { height: 6px; width: 1469px; background: #828282; border-radius: 3px; }
  .sidetabs { position: absolute; top: 9px; right: 3px; display: flex; flex-direction: column; gap: 15px; }
  .sidetab { box-sizing: border-box; width: 27px; height: 146px; background: #464646; color: #fff; display: flex; flex-direction: column; align-items: center; padding-top: 19px; gap: 10px; font: 500 12px 'Noto Sans', sans-serif; }
  .sidetab.mfg { padding-top: 8px; gap: 7px; letter-spacing: -0.15px; }
  .sidetab span { writing-mode: vertical-rl; white-space: nowrap; line-height: 17px; }

  .status { height: 25px; display: flex; align-items: center; }
  .status span { width: 1807px; padding: 1px 0 0 6px; letter-spacing: 0.09px; }
  .statbox { box-sizing: border-box; width: 27px; height: 21px; border-left: 1px solid #ccc; border-right: 1px solid #ccc; display: grid; place-items: center; }
  .last { margin-left: 25px; }
  .behind { position: relative; width: 8px; background: linear-gradient(#2b2b2b 37px, #202020 37px); }
  .behind i { position: absolute; }
  .s1 { left: 1px; top: 155px; width: 2px; height: 6px; background: #80541c; }
  .s2 { left: 3px; top: 157px; width: 5px; height: 2px; background: #888; }
  .s3 { left: 1px; top: 241px; width: 2px; height: 10px; background: #80541c; }
  .s4 { left: 0; top: 1002px; width: 8px; height: 26px; background: #5c1c70; }
  .s5 { left: 0; top: 108px; width: 8px; height: 1px; background: #333; }

  .taskbar { height: 50px; display: flex; background: #1d1f1f; color: #fff; font-family: 'Noto Sans', sans-serif; }
  .start { width: 60px; display: grid; place-items: center; }
  .search { box-sizing: border-box; width: 430px; display: flex; align-items: center; background: #323232; border: 1px solid #575757; padding-left: 14px; color: #dcdcdc; font-size: 18px; }
  .search span { margin-left: 14px; letter-spacing: -0.1px; }
  .apps { display: flex; padding-left: 1px; }
  .app { width: 62.05px; box-sizing: border-box; display: grid; place-items: center; border-bottom: 3px solid transparent; padding-top: 2px; font-family: 'Liberation Sans', sans-serif; }
  .app.on { border: 0; background: linear-gradient(#ff97d4, #ff97d4) 50% 100% / 51px 3px no-repeat; padding-bottom: 2px; }
  .app.tasks { padding-right: 2px; }
  .app.wa { padding-left: 3px; }
  .app.folder { background: linear-gradient(90deg, #ff97d4 40px, #c878a8 40px) 50% 100% / 51px 3px no-repeat; }
  .app.eagle { background: #a65c24; border-bottom-color: #ff7d00; }
  .tray { margin-left: auto; display: flex; align-items: center; padding-right: 21px; }
  .clock { display: flex; flex-direction: column; align-items: center; width: 72px; margin-left: 7px; font-size: 14.500px; line-height: 23px; letter-spacing: -0.4px; }
  .notif { margin: 9px 0 0 23px; }
</style>
